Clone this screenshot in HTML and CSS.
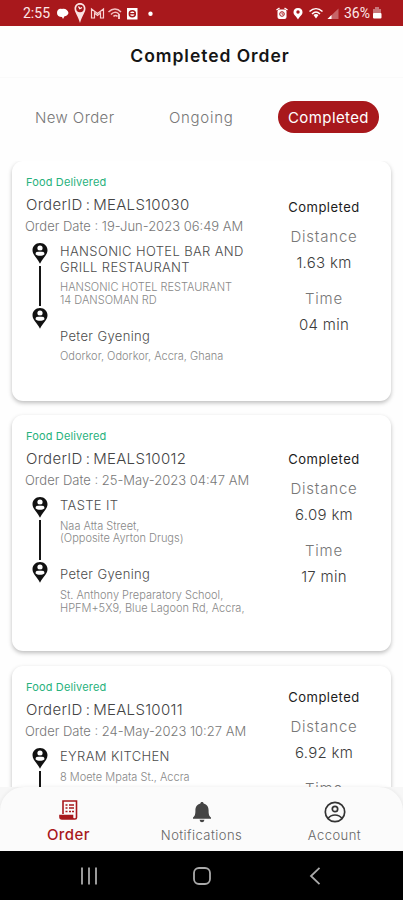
FILE: index.html
```html
<!DOCTYPE html>
<html lang="en">
  <head>
    <meta charset="UTF-8" />
    <meta name="viewport" content="width=device-width, initial-scale=1.0" />
    <title>Completed Order</title>
    <link rel="stylesheet" href="styles.css" />
  </head>
  <body>
    <!-- shared map pin -->
    <svg class="defs" width="0" height="0">
      <symbol id="pin" viewBox="0 0 16 21">
        <path d="M8 0C3.500 0 .5 3.300 .5 7.300c0 4.800 4.500 7.200 7.500 13.500 3-6.300 7.500-8.700 7.500-13.500C15.500 3.300 12.500 0 8 0z" fill="#111" />
        <circle cx="8" cy="5" r="2.600" fill="#fff" />
        <path d="M3.500 11.200c0-2.200 1.700-3.200 4.500-3.200s4.500 1 4.500 3.200c-1.200 1-2.700 1.500-4.500 1.500s-3.300-.5-4.500-1.500z" fill="#fff" />
        <path d="M4 8.200h8" stroke="#111" stroke-width="1" />
      </symbol>
    </svg>
    <div class="phone">
      <div class="status-bar">
        <span class="clock">2:55</span>
        <svg class="status-left" width="100" height="26" viewBox="56 0 100 26">
          <path d="M57 13c0-3 2-5 5-4 3-1 6 1 6.500 4-.5 2-2 3-4 3.200L63 19l-1-2c-3 0-5-1.500-5-4z" fill="#fff" />
          <path d="M80 3c-3.500 0-5.500 2.500-5.500 5.500 0 4 3.500 7 5.500 14.500 2-7.500 5.500-10.500 5.500-14.500C85.500 5.500 83.500 3 80 3z" fill="#fbe3e3" />
          <circle cx="80" cy="8.500" r="3.800" fill="#a8181c" />
          <path d="M78.500 6.500l1.300 2.200 2.200-1.200" fill="none" stroke="#fff" stroke-width="1.300" />
          <path d="M91.500 9v9h3v-5l3 2.500 3-2.500v5h3V9l-6 4.500z" fill="none" stroke="#f8d5d5" stroke-width="1.200" />
          <path d="M108.500 12c4-4 9-4 12.500 0M111 14.500c2-2.500 5-3 8-.5M113.500 16.500c1-1.500 3-1.500 4 0" fill="none" stroke="#f3c2c3" stroke-width="1.500" />
          <path d="M119 14v5" stroke="#f3c2c3" stroke-width="2" />
          <rect x="127" y="8" width="10.500" height="11.500" fill="#fff" />
          <circle cx="132.300" cy="13.700" r="3" fill="none" stroke="#a8181c" stroke-width="1.500" />
          <path d="M130 13.700h5" stroke="#a8181c" stroke-width="1.400" />
          <circle cx="150.500" cy="13.700" r="2.200" fill="#fff" />
        </svg>
        <svg class="status-right" width="66" height="26" viewBox="275 0 66 26">
          <rect x="277.500" y="9.500" width="9" height="9.500" rx="2" fill="#fff" />
          <path d="M276.500 10l3-2M287.500 10l-3-2" stroke="#fff" stroke-width="1.500" />
          <circle cx="282" cy="14" r="2.300" fill="none" stroke="#a8181c" stroke-width="1" />
          <path d="M282 12.500v1.700h1.500" fill="none" stroke="#a8181c" stroke-width=".8" />
          <path d="M298 8c-3 0-4.500 2-4.500 4.200 0 3 3 4 4.500 7.300 1.500-3.300 4.500-4.300 4.500-7.300C302.500 10 301 8 298 8z" fill="#fff" />
          <circle cx="298" cy="12" r="1.700" fill="#a8181c" />
          <path d="M309.500 11.500c4-3.800 9-3.800 13 0M312 14c2.500-2.500 5.500-2.500 8 0" fill="none" stroke="#fff" stroke-width="1.500" />
          <path d="M313.500 15q2.500-2 5 0L316 18.500z" fill="#fff" />
          <path d="M327.500 19l11-10.500V19z" fill="#c76468" />
          <path d="M327.500 19l4-4v4z" fill="#fff" />
        </svg>
        <span class="battery-level">36%</span>
        <svg class="battery" width="10" height="14" viewBox="0 0 10 14">
          <path d="M3 1h4v2h2v5H1V3h2z" fill="#c9777a" />
          <rect x="1" y="7" width="8.500" height="5.500" rx="1" fill="#fff" />
        </svg>
      </div>

      <header class="app-header">
        <h1 class="page-title">Completed Order</h1>
      </header>

      <nav class="tabs">
        <span class="tab">New Order</span>
        <span class="tab tab-ongoing">Ongoing</span>
        <span class="tab tab-active">Completed</span>
      </nav>

      <main class="orders">
        <section class="card card-first">
          <div class="details">
            <p class="status">Food Delivered</p>
            <p class="order-id">OrderID : MEALS10030</p>
            <p class="order-date">Order Date : 19-Jun-2023 06:49 AM</p>
            <div class="route">
              <div class="route-line">
                <svg class="pin"><use href="#pin" /></svg>
                <span class="line"></span>
                <svg class="pin"><use href="#pin" /></svg>
              </div>
              <div class="stops">
                <p class="name">HANSONIC HOTEL BAR AND<br />GRILL RESTAURANT</p>
                <p class="address address-caps">HANSONIC HOTEL RESTAURANT<br />14 DANSOMAN RD</p>
                <p class="name customer">Peter Gyening</p>
                <p class="address">Odorkor, Odorkor, Accra, Ghana</p>
              </div>
            </div>
          </div>
          <div class="summary">
            <p class="state">Completed</p>
            <p class="label">Distance</p>
            <p class="value">1.63 km</p>
            <p class="label label-time">Time</p>
            <p class="value">04 min</p>
          </div>
        </section>

        <section class="card card-second">
          <div class="details">
            <p class="status">Food Delivered</p>
            <p class="order-id">OrderID : MEALS10012</p>
            <p class="order-date">Order Date : 25-May-2023 04:47 AM</p>
            <div class="route">
              <div class="route-line">
                <svg class="pin"><use href="#pin" /></svg>
                <span class="line"></span>
                <svg class="pin"><use href="#pin" /></svg>
              </div>
              <div class="stops">
                <p class="name">TASTE IT</p>
                <p class="address">Naa Atta Street,<br />(Opposite Ayrton Drugs)</p>
                <p class="name customer">Peter Gyening</p>
                <p class="address">St. Anthony Preparatory School,<br />HPFM+5X9, Blue Lagoon Rd, Accra,</p>
              </div>
            </div>
          </div>
          <div class="summary">
            <p class="state">Completed</p>
            <p class="label">Distance</p>
            <p class="value">6.09 km</p>
            <p class="label label-time">Time</p>
            <p class="value">17 min</p>
          </div>
        </section>

        <section class="card card-third">
          <div class="details">
            <p class="status">Food Delivered</p>
            <p class="order-id">OrderID : MEALS10011</p>
            <p class="order-date">Order Date : 24-May-2023 10:27 AM</p>
            <div class="route">
              <div class="route-line">
                <svg class="pin"><use href="#pin" /></svg>
                <span class="line"></span>
              </div>
              <div class="stops">
                <p class="name">EYRAM KITCHEN</p>
                <p class="address">8 Moete Mpata St., Accra</p>
              </div>
            </div>
          </div>
          <div class="summary">
            <p class="state">Completed</p>
            <p class="label">Distance</p>
            <p class="value">6.92 km</p>
            <p class="label label-time">Time</p>
          </div>
        </section>
      </main>

      <div class="bottom-wrap">
        <nav class="bottom-nav">
          <div class="nav-item nav-active">
            <svg width="22" height="22" viewBox="0 0 22 22" fill="none" stroke="#a8181c">
              <path d="M5 15V2h13.500v16.500q0 1.500-1.500 1.500H4q-2 0-2-2v-1.500h12.500v2q0 1.500 1.500 1.500" stroke-width="1.600" />
              <path d="M2.500 17h12v2.500H4q-1.500 0-1.500-2z" fill="#a8181c" stroke-width="1" />
              <path d="M7.500 6h2M7.500 9h2M7.500 12.500h2M11 6h5M11 9h5M11 12.500h2M14 12.500h2" stroke-width="1.700" />
            </svg>
            <span>Order</span>
          </div>
          <div class="nav-item">
            <svg width="22" height="22" viewBox="0 0 22 22" fill="#444">
              <path d="M11 1c1 0 1.600.7 1.600 1.600 3.500.8 5 3.500 5 6.900 0 4 .5 5.500 2.400 7v1.300H2v-1.300c1.900-1.500 2.400-3 2.400-7 0-3.400 1.500-6.100 5-6.900C9.400 1.700 10 1 11 1z" />
              <path d="M8.500 18.700h5q-.5 2.500-2.500 2.500t-2.500-2.500z" />
            </svg>
            <span>Notifications</span>
          </div>
          <div class="nav-item">
            <svg width="22" height="22" viewBox="0 0 22 22" fill="none" stroke="#333" stroke-width="1.700">
              <circle cx="11" cy="11" r="9.700" />
              <circle cx="11" cy="8" r="2.700" />
              <path d="M4 17.500q2.500-3.500 7-3.500t7 3.500" />
            </svg>
            <span>Account</span>
          </div>
        </nav>
      </div>

      <div class="system-nav">
        <svg width="18" height="18" viewBox="0 0 18 18"><path d="M2 .5v17M9 .5v17M16 .5v17" stroke="#aaa" stroke-width="1.800" /></svg>
        <svg width="18" height="18" viewBox="0 0 18 18"><rect x="1" y="1" width="16" height="16" rx="5" fill="none" stroke="#aaa" stroke-width="1.800" /></svg>
        <svg width="18" height="18" viewBox="0 0 18 18"><path d="M13.500 .8L5 9l8.500 8.200" fill="none" stroke="#aaa" stroke-width="1.800" /></svg>
      </div>
    </div>
  </body>
</html>
```

FILE: styles.css
```css
* {
  box-sizing: border-box;
}
body {
  margin: 0;
  background: #fff;
  font-family: Inter, "Liberation Sans", sans-serif;
  font-weight: 300;
}
p,
h1 {
  margin: 0;
  white-space: nowrap;
}
.defs {
  display: block;
}
.phone {
  display: flex;
  flex-direction: column;
  width: 403px;
  height: 900px;
  overflow: hidden;
  background: #fefefe;
}
.status-bar {
  display: flex;
  align-items: center;
  flex: none;
  height: 26px;
  padding-left: 23px;
  background: #a8181c;
  color: #fde8e8;
  font-family: Roboto, sans-serif;
  font-size: 14px;
  font-weight: 400;
}
.clock {
  width: 33px;
}
.status-right {
  margin-left: 119px;
}
.battery-level {
  width: 28px;
  margin-left: 3px;
}
.app-header {
  flex: none;
  height: 52px;
  padding-left: 17px;
  border-bottom: 1px solid #fafafa;
  text-align: center;
}
.page-title {
  color: #151515;
  font-size: 17.5px;
  font-weight: 600;
  line-height: 60px;
  letter-spacing: 0.95px;
}
.tabs {
  display: flex;
  flex: none;
  height: 83px;
  padding: 23px 24px 0 35px;
  color: #777;
  font-size: 15px;
  line-height: 34px;
  letter-spacing: 0.4px;
}
.tab {
  width: 134px;
}
.tab-ongoing {
  width: 109px;
  letter-spacing: 0.7px;
}
.tab-active {
  width: 101px;
  height: 32px;
  border-radius: 16px;
  background: #a8181c;
  color: #fff;
  font-weight: 400;
  text-align: center;
}
.orders {
  flex: none;
  height: 626px;
  padding: 0 12px;
  overflow: hidden;
}
.card {
  display: flex;
  border-radius: 11px;
  background: #fff;
  box-shadow: 0 2px 4px rgba(0, 0, 0, 0.26);
}
.card-first {
  height: 240px;
  margin-bottom: 14px;
}
.card-second {
  height: 236px;
  margin-bottom: 15px;
}
.card-third {
  height: 236px;
}
.details {
  width: 258px;
  padding: 12px 0 0 14px;
}
.status {
  color: #27b17c;
  font-size: 11px;
  font-weight: 400;
  line-height: 19px;
  letter-spacing: 0.15px;
}
.order-id {
  margin-top: 2px;
  color: #444;
  font-size: 15px;
  line-height: 22px;
  letter-spacing: 0.3px;
  word-spacing: -1.5px;
}
.order-date {
  margin-left: -1px;
  color: #777;
  font-size: 13px;
  line-height: 20px;
}
.route {
  display: flex;
  margin-top: 7px;
}
.route-line {
  display: flex;
  flex-direction: column;
  align-items: center;
  width: 28px;
}
.pin {
  width: 16px;
  height: 21px;
}
.line {
  width: 2px;
  height: 40px;
  margin: 2px 0;
  background: #151515;
}
.name {
  color: #4c4c4c;
  font-size: 13px;
  line-height: 15.5px;
  letter-spacing: 0.36px;
}
.stops {
  padding: 1px 0 0 6px;
}
.address {
  margin-top: 6px;
  color: #888;
  font-size: 11px;
  line-height: 12.7px;
}
.customer {
  margin-top: 22.5px;
}
.summary {
  width: 108px;
  padding-top: 37px;
  text-align: center;
}
.card-second .summary {
  padding-top: 35px;
}
.card-third .summary {
  padding-top: 22px;
}
.state {
  color: #1c1c1c;
  font-size: 13px;
  font-weight: 400;
  line-height: 18px;
  letter-spacing: 0.5px;
}
.label {
  margin-top: 10px;
  color: #777;
  font-size: 15px;
  line-height: 22px;
  letter-spacing: 0.8px;
}
.value {
  margin-top: 5px;
  color: #3c3c3c;
  font-size: 15px;
  line-height: 20px;
  letter-spacing: 0.3px;
}
.label-time {
  margin-top: 15px;
}
.bottom-wrap {
  flex: none;
  height: 64px;
  background: #f7f7f7;
}
.bottom-nav {
  display: flex;
  height: 64px;
  padding: 0 2px;
  border-radius: 24px 24px 0 0;
  background: #fbfbfb;
  box-shadow: 0 0 4px rgba(0, 0, 0, 0.08);
}
.nav-item {
  display: flex;
  flex: 1;
  flex-direction: column;
  align-items: center;
  padding-top: 14px;
  color: #666;
  font-size: 13px;
  line-height: 24px;
  letter-spacing: 0.45px;
}
.nav-active {
  padding-top: 12px;
  color: #a8181c;
  font-size: 15px;
  font-weight: 500;
  line-height: 27px;
}
.system-nav {
  display: flex;
  align-items: center;
  justify-content: space-between;
  flex: none;
  height: 49px;
  padding: 0 79px 0 80px;
  background: #000;
}
```
